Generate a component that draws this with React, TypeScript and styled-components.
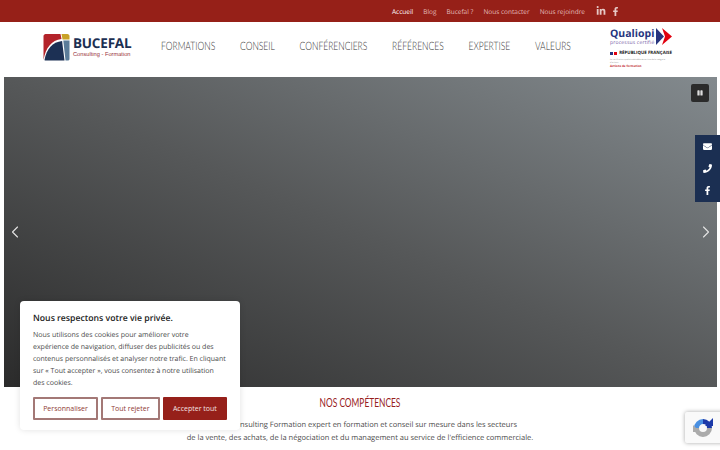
import React from "react";
import styled, { createGlobalStyle } from "styled-components";
import { FaEnvelope, FaFacebookF, FaLinkedinIn, FaPause, FaPhone } from "react-icons/fa";
import { FiChevronLeft, FiChevronRight } from "react-icons/fi";

const topLinks = ["Accueil", "Blog", "Bucefal ?", "Nous contacter", "Nous rejoindre"];
const menu = ["FORMATIONS", "CONSEIL", "CONFÉRENCIERS", "RÉFÉRENCES", "EXPERTISE", "VALEURS"];

export default function App() {
  return (
    <>
      <GlobalStyle />
      <Page>
        <TopBar>
          {topLinks.map((label, i) => (
            <TopLink key={label} $active={i === 0}>
              {label}
            </TopLink>
          ))}
          <Socials>
            <FaLinkedinIn size={10} />
            <FaFacebookF size={9} />
          </Socials>
        </TopBar>

        <Header>
          <Logo>
            <svg width="27" height="27" viewBox="0 0 26 27">
              <path d="M2 0H17L18 5C8 6 2 14 0 26V2C0 1 1 0 2 0Z" fill="#b3232a" />
              <path d="M18 0H24C25 0 26 1 26 2V5.5H19Z" fill="#c9a227" />
              <path d="M19.8 6.5H26V25C26 26 25 26.5 24 26.5H22Z" fill="#5b7c99" />
              <path d="M18.6 7L21 26.5H2C1 26.5 1 26 1 26C3 15 9 8 18.6 7Z" fill="#1c3054" />
            </svg>
            <LogoText>
              <LogoName>BUCEFAL</LogoName>
              <LogoSub>Consulting - Formation</LogoSub>
            </LogoText>
          </Logo>
          <Menu>
            {menu.map((label) => (
              <MenuItem key={label}>{label}</MenuItem>
            ))}
          </Menu>
          <Qualiopi>
            <QualiopiTop>
              <div>
                <QualiopiName>Qualiopi</QualiopiName>
                <QualiopiSub>processus certifié</QualiopiSub>
              </div>
              <svg width="16" height="17" viewBox="0 0 16 17">
                <path d="M0 0L8 8.5L0 17Z" fill="#27357e" />
                <path d="M6 0L16 8.5L6 17L9 8.5Z" fill="#e1000f" />
              </svg>
            </QualiopiTop>
            <Republique>
              <Flag />
              RÉPUBLIQUE FRANÇAISE
            </Republique>
            <Fine>La certification qualité a été délivrée au titre de la catégorie d'actions</Fine>
            <FineRed>Actions de formation</FineRed>
          </Qualiopi>
        </Header>

        <Hero>
          <PauseButton>
            <FaPause size={6} />
          </PauseButton>
          <Arrow $side="left">
            <FiChevronLeft size={20} strokeWidth={1.3} />
          </Arrow>
          <Arrow $side="right">
            <FiChevronRight size={20} strokeWidth={1.3} />
          </Arrow>
        </Hero>

        <Section>
          <SectionTitle>NOS COMPÉTENCES</SectionTitle>
          <SectionText>
            Bucefal Consulting Formation expert en formation et conseil sur mesure dans les secteurs
            <br />
            de la vente, des achats, de la négociation et du management au service de l'efficience commerciale.
          </SectionText>
        </Section>

        <SideBar>
          <SideIcon>
            <FaEnvelope size={9} />
          </SideIcon>
          <SideIcon>
            <FaPhone size={9} />
          </SideIcon>
          <SideIcon>
            <FaFacebookF size={9} />
          </SideIcon>
        </SideBar>

        <CookieCard>
          <CookieTitle>Nous respectons votre vie privée.</CookieTitle>
          <CookieText>
            Nous utilisons des cookies pour améliorer votre
            <br />
            expérience de navigation, diffuser des publicités ou des
            <br />
            contenus personnalisés et analyser notre trafic. En cliquant
            <br />
            sur « Tout accepter », vous consentez à notre utilisation
            <br />
            des cookies.
          </CookieText>
          <CookieActions>
            <CookieButton>Personnaliser</CookieButton>
            <CookieButton>Tout rejeter</CookieButton>
            <CookieButton $primary>Accepter tout</CookieButton>
          </CookieActions>
        </CookieCard>

        <Recaptcha>
          <svg width="22" height="22" viewBox="0 0 22 22" fill="none">
            <path d="M4.5 11A6.5 6.5 0 0 1 11 4.5" stroke="#4a90e2" strokeWidth="5" />
            <path d="M11 4.5A6.5 6.5 0 0 1 17.5 11" stroke="#1c3aa9" strokeWidth="5" />
            <path d="M17.5 11A6.5 6.5 0 0 1 4.5 11" stroke="#ababab" strokeWidth="5" />
            <path d="M21 1V9H13Z" fill="#1c3aa9" />
            <path d="M1 8V15H8Z" fill="#ababab" />
          </svg>
        </Recaptcha>
      </Page>
    </>
  );
}

const GlobalStyle = createGlobalStyle`
  html, body {
    margin: 0;
    height: 450px;
    overflow: hidden;
    background: #fff;
    font-family: "Open Sans", "Liberation Sans", sans-serif;
    text-rendering: geometricPrecision;
  }
`;

const Page = styled.div`
  position: relative;
  width: 720px;
  height: 450px;
  overflow: hidden;
`;

const TopBar = styled.div`
  display: flex;
  align-items: center;
  justify-content: flex-end;
  gap: 10px;
  height: 22px;
  padding-right: 100px;
  box-sizing: border-box;
  background: #962018;
`;

const TopLink = styled.a<{ $active?: boolean }>`
  font-size: 6.5px;
  line-height: 21px;
  color: ${(p) => (p.$active ? "#fff" : "#e2bcb8")};
`;

const Socials = styled.div`
  display: flex;
  align-items: center;
  gap: 5px;
  margin-left: 1px;
  color: #e6c9c6;
`;

const Header = styled.header`
  display: flex;
  align-items: center;
  height: 55px;
  padding-left: 43px;
`;

const Logo = styled.div`
  display: flex;
  align-items: center;
  gap: 3px;
  width: 118px;
  flex-shrink: 0;
  margin-top: -4px;
`;

const LogoText = styled.div`
  display: flex;
  flex-direction: column;
`;

const LogoName = styled.span`
  font-weight: 700;
  font-size: 13.5px;
  line-height: 15px;
  letter-spacing: -0.2px;
  color: #1c2f52;
`;

const LogoSub = styled.span`
  font-family: "Liberation Sans", sans-serif;
  font-size: 5.7px;
  line-height: 8px;
  color: #97323a;
`;

const Menu = styled.nav`
  display: flex;
  gap: 33.5px;
  margin-top: -5px;
  transform: scaleX(0.74);
  transform-origin: left center;
`;

const MenuItem = styled.a`
  font-family: "Lato", sans-serif;
  font-weight: 300;
  font-size: 11.5px;
  line-height: 14px;
  white-space: nowrap;
  color: #333;
`;

const Qualiopi = styled.div`
  position: absolute;
  top: 28px;
  left: 610px;
  width: 62px;
`;

const QualiopiTop = styled.div`
  display: flex;
  justify-content: space-between;
  align-items: flex-start;
`;

const QualiopiName = styled.div`
  font-weight: 700;
  font-size: 10.5px;
  line-height: 12px;
  color: #27357e;
`;

const QualiopiSub = styled.div`
  font-size: 5px;
  line-height: 7px;
  letter-spacing: 0.2px;
  color: #7a5fa8;
`;

const Republique = styled.div`
  display: flex;
  align-items: center;
  gap: 2px;
  margin-top: 3px;
  font-size: 4.4px;
  font-weight: 700;
  line-height: 6px;
  white-space: nowrap;
  color: #222;
`;

const Flag = styled.span`
  width: 8px;
  height: 3px;
  background: linear-gradient(90deg, #27357e 0 38%, #fff 38% 62%, #e1000f 62%);
`;

const Fine = styled.div`
  margin-top: 2px;
  font-size: 2px;
  line-height: 3px;
  color: #888;
`;

const FineRed = styled.div`
  font-size: 3px;
  font-weight: 700;
  line-height: 4px;
  color: #c2272d;
`;

const Hero = styled.div`
  position: relative;
  height: 310px;
  margin: 0 3px 0 4px;
  background: linear-gradient(to top right, #2b2b2b 0%, #565859 50%, #838a8e 100%);
`;

const PauseButton = styled.button`
  position: absolute;
  top: 7px;
  right: 8px;
  display: flex;
  align-items: center;
  justify-content: center;
  width: 18px;
  height: 18px;
  padding: 0;
  border: 0;
  border-radius: 2px;
  background: #2b2b2b;
  color: #ddd;
`;

const Arrow = styled.span<{ $side: "left" | "right" }>`
  position: absolute;
  top: 145px;
  ${(p) => p.$side}: 1px;
  display: flex;
  color: #e4e4e4;
`;

const Section = styled.section`
  text-align: center;
  padding-top: 9px;
`;

const SectionTitle = styled.h2`
  margin: 0;
  font-family: "Lato", sans-serif;
  font-weight: 400;
  font-size: 12.5px;
  line-height: 14px;
  transform: scaleX(0.67);
  color: #97201c;
`;

const SectionText = styled.p`
  margin: 9px 0 0;
  font-size: 7.5px;
  line-height: 13px;
  color: #4a4a4a;
`;

const SideBar = styled.div`
  position: absolute;
  top: 135px;
  right: 0;
  display: flex;
  flex-direction: column;
  width: 25px;
  height: 67px;
  background: #1b2f52;
  color: #fff;
`;

const SideIcon = styled.span`
  display: flex;
  flex: 1;
  align-items: center;
  justify-content: center;
`;

const CookieCard = styled.div`
  position: absolute;
  left: 20px;
  top: 301px;
  width: 220px;
  height: 129px;
  box-sizing: border-box;
  padding: 10px 13px;
  background: #fff;
  border-radius: 4px;
  box-shadow: 0 0 6px rgba(0, 0, 0, 0.12);
`;

const CookieTitle = styled.div`
  font-size: 8.7px;
  font-weight: 600;
  line-height: 14px;
  color: #222;
`;

const CookieText = styled.p`
  margin: 5px 0 0;
  font-size: 7px;
  line-height: 12px;
  white-space: nowrap;
  color: #4a4a4a;
`;

const CookieActions = styled.div`
  display: flex;
  gap: 3px;
  margin-top: 7px;
`;

const CookieButton = styled.button<{ $primary?: boolean }>`
  flex: 1 1 auto;
  height: 23px;
  padding: 0;
  font-family: inherit;
  font-size: 7px;
  border-radius: 1px;
  border: 2px solid ${(p) => (p.$primary ? "#96201a" : "#a37876")};
  background: ${(p) => (p.$primary ? "#96201a" : "#fff")};
  color: ${(p) => (p.$primary ? "#f4e4e2" : "#8f3a34")};
`;

const Recaptcha = styled.div`
  position: absolute;
  left: 685px;
  top: 412px;
  display: flex;
  align-items: center;
  width: 40px;
  height: 31px;
  padding-left: 7px;
  box-sizing: border-box;
  background: #f9f9f9;
  border-radius: 2px;
  box-shadow: 0 0 4px rgba(0, 0, 0, 0.35);
`;
